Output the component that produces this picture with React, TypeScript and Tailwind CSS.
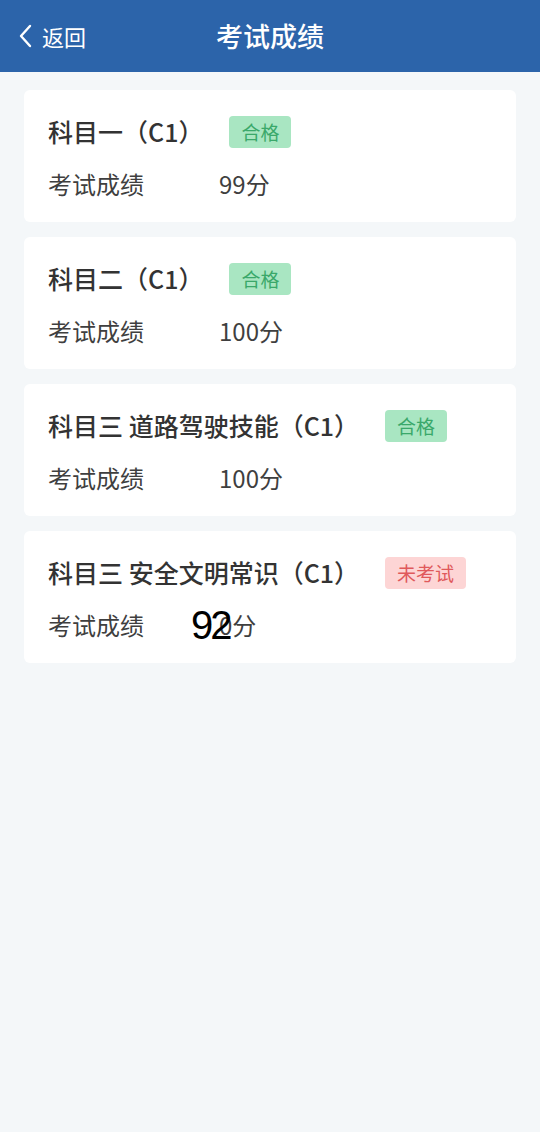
import React from 'react';

type Subject = {
  name: string;
  status: 'pass' | 'none';
  score: string;
};

const subjects: Subject[] = [
  { name: '科目一（C1）', status: 'pass', score: '99分' },
  { name: '科目二（C1）', status: 'pass', score: '100分' },
  { name: '科目三 道路驾驶技能（C1）', status: 'pass', score: '100分' },
  { name: '科目三 安全文明常识（C1）', status: 'none', score: '0分' },
];

const Badge: React.FC<{ status: Subject['status'] }> = ({ status }) =>
  status === 'pass' ? (
    <span className="flex h-8 items-center rounded-[4px] bg-[#a9e6c2] px-[12px] text-[19px] text-[#3aa86a]">合格</span>
  ) : (
    <span className="flex h-8 items-center rounded-[4px] bg-[#fdd5d5] px-[12px] text-[19px] text-[#e0595b]">未考试</span>
  );

const App: React.FC = () => {
  return (
    <div
      className="min-h-[1132px] w-full bg-[#f4f7f9]"
      style={{ fontFamily: "'Noto Sans CJK SC', Roboto, sans-serif" }}
    >
      {/* Header */}
      <header className="relative flex h-[72px] items-center justify-center bg-[#2c64aa] text-white">
        <div className="absolute left-0 top-0 flex h-full items-center pl-[19px]">
          <svg width="13" height="24" viewBox="0 0 13 24" fill="none" stroke="white" strokeWidth="2.4" strokeLinecap="round" strokeLinejoin="round">
            <path d="M11 2 L2 12 L11 22" />
          </svg>
          <span className="ml-[10px] text-[22px]">返回</span>
        </div>
        <h1 className="text-[27px] font-medium">考试成绩</h1>
      </header>

      <main className="flex flex-col gap-[15px] px-6 pt-[18px]">
        {subjects.map((s, i) => (
          <div key={i} className="flex h-[132px] flex-col gap-5 rounded-[6px] bg-white px-6 pt-[26px]">
            <div className="flex h-8 items-center gap-[26px]">
              <span className="text-[25px] font-medium text-[#333]">{s.name}</span>
              <Badge status={s.status} />
            </div>
            <div className="flex h-8 items-center text-[24px] text-[#3f3f3f]">
              <span className="w-[171px]">考试成绩</span>
              <span className="relative">
                {s.score}
                {i === 3 && (
                  <span className="absolute left-[-28px] top-[-2px] text-[40px] leading-none tracking-[-3px] text-black" style={{ fontFamily: "'Liberation Sans', sans-serif" }}>
                    92
                  </span>
                )}
              </span>
            </div>
          </div>
        ))}
      </main>
    </div>
  );
};

export default App;
